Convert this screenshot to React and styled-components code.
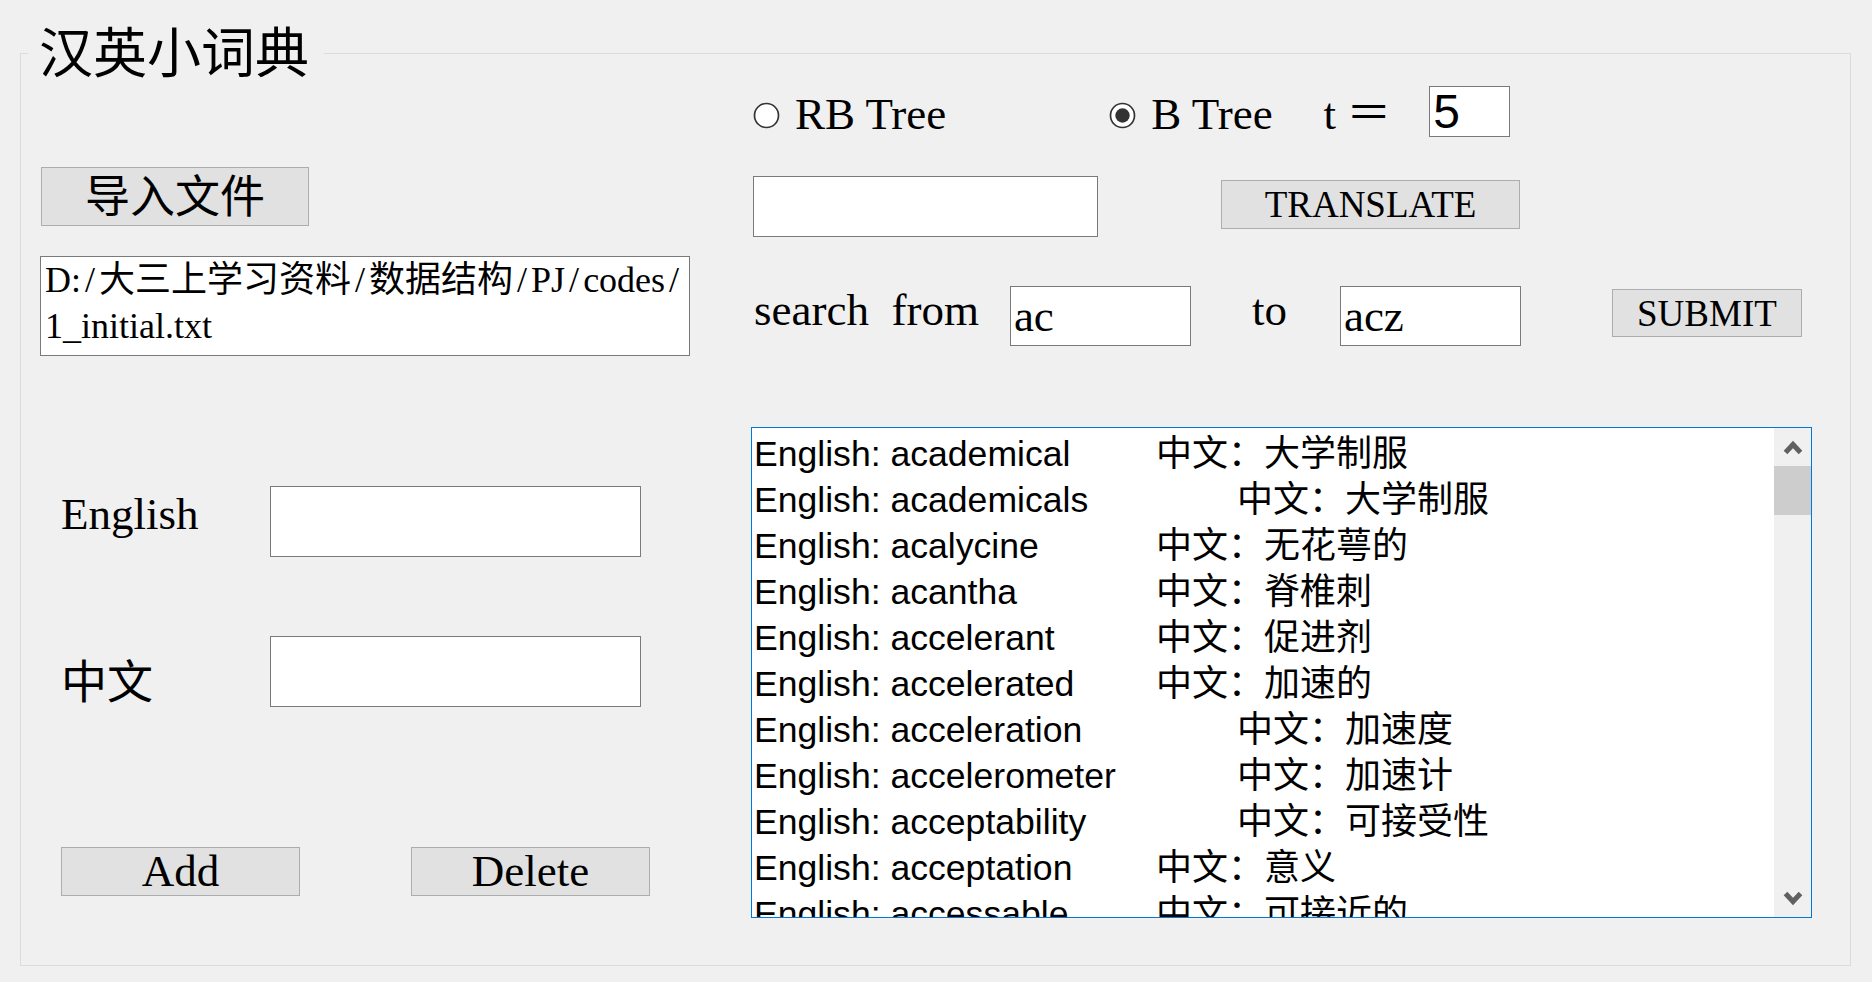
import React from "react";
import styled, { createGlobalStyle } from "styled-components";

const serif = `"Liberation Serif", "Noto Sans CJK SC", serif`;
const sans = `"Liberation Sans", "Noto Sans CJK SC", sans-serif`;
const cjk = `"Noto Sans CJK SC", sans-serif`;

const GlobalStyle = createGlobalStyle`
  html, body {
    margin: 0;
    background: #f0f0f0;
  }
  body {
    width: 1872px;
    height: 982px;
    overflow: hidden;
    font-family: ${serif};
    color: #000;
  }
`;

const Frame = styled.fieldset`
  box-sizing: border-box;
  height: 945px;
  margin: 21px 21px 0 20px;
  padding: 0;
  border: 1px solid #dcdcdc;
  min-width: 0;
`;

const Title = styled.legend`
  margin-left: 7px;
  padding: 0 15px 6px 11px;
  font-family: ${cjk};
  font-size: 54px;
  line-height: 58px;
`;

const Body = styled.div`
  display: grid;
  grid-template-columns: 730px 1fr;
`;

const Pane = styled.div`
  display: flex;
  flex-direction: column;
  align-items: flex-start;
`;

const Button = styled.button`
  box-sizing: border-box;
  width: ${(p) => p.$w}px;
  height: ${(p) => p.$h}px;
  margin: ${(p) => p.$mt || 0}px 0 0 ${(p) => p.$ml || 0}px;
  padding: ${(p) => p.$pt || 0}px 0 0;
  background: #e1e1e1;
  border: 1px solid #adadad;
  border-radius: 0;
  font-family: ${serif};
  font-size: ${(p) => p.$fs}px;
  line-height: 1;
  color: #000;
  flex: none;
`;

const PathBox = styled.div`
  box-sizing: border-box;
  width: 650px;
  height: 100px;
  margin: 30px 0 0 19px;
  padding: 0 0 0 4px;
  background: #fff;
  border: 1px solid #7a7a7a;
  font-size: 36px;
  line-height: 46px;
  white-space: nowrap;
  overflow: hidden;
`;

const Slash = styled.span`
  padding: 0 4px;
`;

const FieldRow = styled.div`
  display: flex;
  align-items: flex-start;
  margin-top: ${(p) => p.$mt}px;
  padding-left: 40px;
`;

const FieldLabel = styled.div`
  width: 209px;
  flex: none;
  font-family: ${(p) => (p.$cjk ? cjk : serif)};
  font-size: ${(p) => (p.$cjk ? 46 : 45)}px;
  line-height: 57px;
  margin-top: ${(p) => p.$mt || 0}px;
`;

const TextBox = styled.div`
  box-sizing: border-box;
  width: ${(p) => p.$w}px;
  height: ${(p) => p.$h}px;
  margin: ${(p) => p.$mt || 0}px 0 0 ${(p) => p.$ml || 0}px;
  padding-left: 3px;
  background: #fff;
  border: 1px solid #7a7a7a;
  font-family: ${(p) => (p.$sans ? sans : serif)};
  font-size: ${(p) => p.$fs || 45}px;
  line-height: ${(p) => p.$h - 2}px;
  flex: none;
`;

const ButtonRow = styled.div`
  display: flex;
  gap: 111px;
  margin-top: 140px;
  padding-left: 40px;
`;

const Row = styled.div`
  display: flex;
  align-items: flex-start;
  height: ${(p) => p.$h}px;
  margin-top: ${(p) => p.$mt}px;
`;

const Radio = styled.span`
  display: flex;
  margin: 16px 15px 0 ${(p) => p.$ml || 0}px;
  flex: none;
`;

const Caption = styled.span`
  font-size: 45px;
  line-height: ${(p) => p.$lh || 51}px;
  margin: ${(p) => p.$mt ?? 3}px ${(p) => p.$mr || 0}px 0 ${(p) => p.$ml || 0}px;
  white-space: pre;
  flex: none;
`;

const ListBox = styled.div`
  box-sizing: border-box;
  display: flex;
  width: 1061px;
  height: 491px;
  margin-top: 81px;
  background: #fff;
  border: 1px solid #0078d7;
`;

const ListContent = styled.div`
  flex: 1;
  overflow: hidden;
  padding: 3px 0 0 2px;
`;

const Entry = styled.div`
  display: grid;
  grid-template-columns: ${(p) => (p.$far ? 483 : 402)}px auto;
  height: 46px;
  font-family: ${sans};
  font-size: 35.6px;
  line-height: 46px;
  white-space: nowrap;
`;

const Meaning = styled.span`
  font-size: 36px;
`;

const ScrollBar = styled.div`
  display: flex;
  flex-direction: column;
  align-items: center;
  width: 37px;
  background: #f0f0f0;
  flex: none;
`;

const ArrowCell = styled.div`
  display: flex;
  align-items: center;
  justify-content: center;
  width: 100%;
  height: ${(p) => p.$h}px;
  flex: none;
`;

const Thumb = styled.div`
  width: 100%;
  height: 49px;
  background: #cdcdcd;
`;

const Spacer = styled.div`
  flex: 1;
`;

function RadioMark({ checked }) {
  return (
    <svg width="27" height="27" viewBox="0 0 27 27">
      <circle cx="13.5" cy="13.5" r="12" fill="#fff" stroke="#333" strokeWidth="1.7" />
      {checked && <circle cx="13.5" cy="13.5" r="7.2" fill="#333" />}
    </svg>
  );
}

function Chevron({ down }) {
  return (
    <svg width="20" height="18" viewBox="0 0 20 18">
      <polyline
        points={down ? "2.5,3.5 10,11.5 17.5,3.5" : "2.5,14.5 10,6.5 17.5,14.5"}
        fill="none"
        stroke="#606060"
        strokeWidth="5"
      />
    </svg>
  );
}

const entries = [
  { en: "academical", zh: "大学制服" },
  { en: "academicals", zh: "大学制服", far: true },
  { en: "acalycine", zh: "无花萼的" },
  { en: "acantha", zh: "脊椎刺" },
  { en: "accelerant", zh: "促进剂" },
  { en: "accelerated", zh: "加速的" },
  { en: "acceleration", zh: "加速度", far: true },
  { en: "accelerometer", zh: "加速计", far: true },
  { en: "acceptability", zh: "可接受性", far: true },
  { en: "acceptation", zh: "意义" },
  { en: "accessable", zh: "可接近的" },
];

export default function App() {
  return (
    <>
      <GlobalStyle />
      <Frame>
        <Title>汉英小词典</Title>
        <Body>
          <Pane>
            <Button $w={268} $h={59} $mt={82} $ml={20} $fs={45} $pt={4}>
              导入文件
            </Button>
            <PathBox>
              D:<Slash>/</Slash>大三上学习资料<Slash>/</Slash>数据结构<Slash>/</Slash>PJ
              <Slash>/</Slash>codes<Slash>/</Slash>
              <br />
              1_initial.txt
            </PathBox>
            <FieldRow $mt={130}>
              <FieldLabel>English</FieldLabel>
              <TextBox $w={371} $h={71} />
            </FieldRow>
            <FieldRow $mt={79}>
              <FieldLabel $cjk $mt={14}>中文</FieldLabel>
              <TextBox $w={371} $h={71} />
            </FieldRow>
            <ButtonRow>
              <Button $w={239} $h={49} $fs={45}>Add</Button>
              <Button $w={239} $h={49} $fs={45}>Delete</Button>
            </ButtonRow>
          </Pane>

          <Pane>
            <Row $mt={1} $h={51}>
              <Radio $ml={2}>
                <RadioMark />
              </Radio>
              <Caption $mr={163}>RB Tree</Caption>
              <Radio>
                <RadioMark checked />
              </Radio>
              <Caption $mr={51}>B Tree</Caption>
              <Caption>t</Caption>
              <Caption $ml={10}>＝</Caption>
              <TextBox $w={81} $h={51} $ml={38} $sans $fs={48}>5</TextBox>
            </Row>
            <Row $mt={39} $h={61}>
              <TextBox $w={345} $h={61} $ml={2} />
              <Button $w={299} $h={49} $mt={4} $ml={123} $fs={37}>
                TRANSLATE
              </Button>
            </Row>
            <Row $mt={49} $h={60}>
              <Caption $ml={3} $mt={0} $lh={48}>search  from</Caption>
              <TextBox $w={181} $h={60} $ml={31}>ac</TextBox>
              <Caption $ml={61} $mt={0} $lh={48}>to</Caption>
              <TextBox $w={181} $h={60} $ml={53}>acz</TextBox>
              <Button $w={190} $h={48} $mt={3} $ml={91} $fs={37}>
                SUBMIT
              </Button>
            </Row>
            <ListBox>
              <ListContent>
                {entries.map((e) => (
                  <Entry key={e.en} $far={e.far}>
                    <span>English: {e.en}</span>
                    <Meaning>中文：{e.zh}</Meaning>
                  </Entry>
                ))}
              </ListContent>
              <ScrollBar>
                <ArrowCell $h={38}>
                  <Chevron />
                </ArrowCell>
                <Thumb />
                <Spacer />
                <ArrowCell $h={36}>
                  <Chevron down />
                </ArrowCell>
              </ScrollBar>
            </ListBox>
          </Pane>
        </Body>
      </Frame>
    </>
  );
}
